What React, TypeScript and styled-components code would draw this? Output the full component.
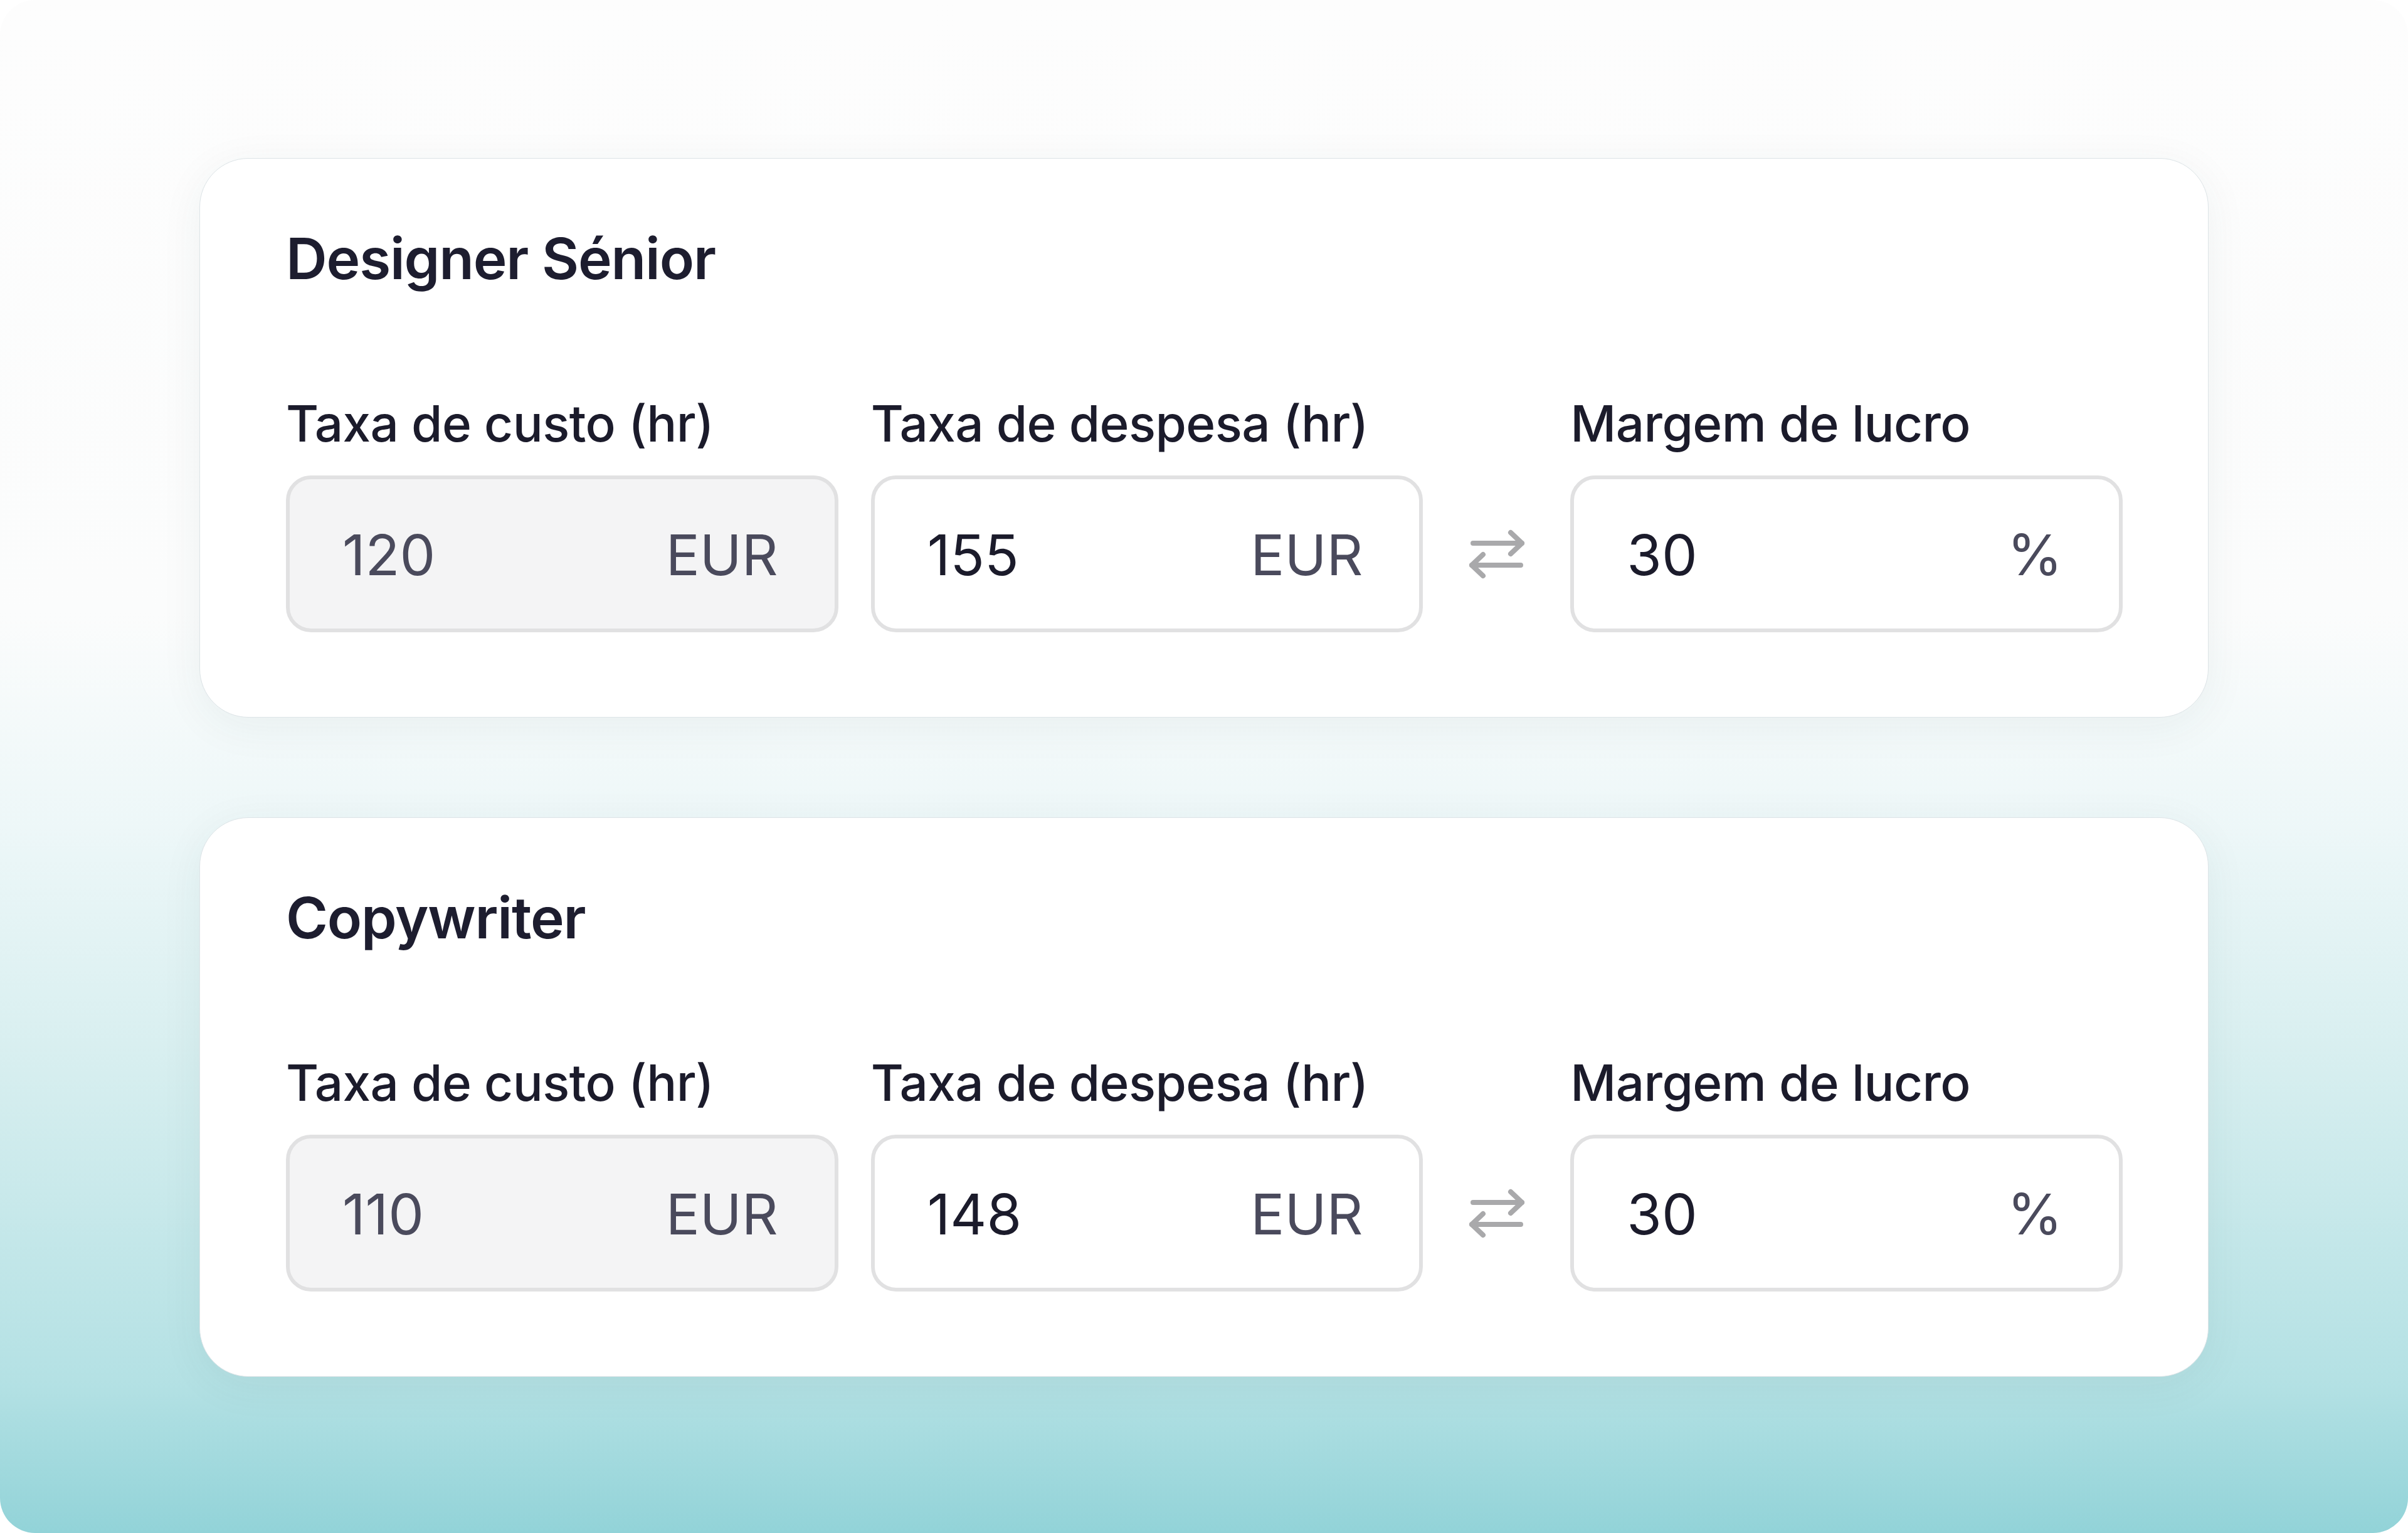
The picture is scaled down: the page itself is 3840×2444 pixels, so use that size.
import * as React from 'react';
import styled, { createGlobalStyle } from 'styled-components';

const GlobalStyle = createGlobalStyle`
    html, body {
        margin: 0;
        padding: 0;
        background: #ffffff;
    }
    body {
        font-family: Inter, "Noto Sans", "Liberation Sans", sans-serif;
        -webkit-font-smoothing: antialiased;
    }
`;

const Frame = styled.div`
    box-sizing: border-box;
    width: 3840px;
    height: 2444px;
    padding: 252px 318px 0;
    border-radius: 56px;
    overflow: hidden;
    display: flex;
    flex-direction: column;
    gap: 159px;
    background: linear-gradient(
        180deg,
        #fdfdfd 0%,
        #fbfcfc 40%,
        #edf7f8 54%,
        #d6eeef 70%,
        #b4e1e4 90%,
        #92d3d8 100%
    );
`;

const Card = styled.section`
    box-sizing: border-box;
    height: 892px;
    padding: 114px 136px 0 137px;
    background: #ffffff;
    border: 1px solid #dde4e7;
    border-radius: 78px;
    box-shadow: 0 14px 70px rgba(40, 60, 70, 0.06);
`;

const Title = styled.h2`
    margin: 0 0 177px;
    font-size: 91px;
    line-height: 1;
    font-weight: 600;
    color: #1d1d2f;
    letter-spacing: -1.2px;
`;

const Row = styled.div`
    display: grid;
    grid-template-columns: 1fr 1fr 131px 1fr;
    column-gap: 52px;
    align-items: end;
`;

const Field = styled.div`
    display: flex;
    flex-direction: column;
    gap: 43px;
`;

const Label = styled.span`
    font-size: 80px;
    line-height: 1;
    font-weight: 500;
    color: #1b1b2b;
    letter-spacing: -0.6px;
    white-space: nowrap;
`;

const Box = styled.div<{ $disabled?: boolean }>`
    box-sizing: border-box;
    height: 250px;
    display: flex;
    align-items: center;
    justify-content: space-between;
    padding: 4px 90px 0 84px;
    border: 6px solid #e1e1e2;
    border-radius: 40px;
    background: ${p => (p.$disabled ? '#f4f4f5' : '#ffffff')};
    font-size: 90px;
    line-height: 1;
    font-weight: 400;
`;

const Value = styled.span<{ $muted?: boolean }>`
    color: ${p => (p.$muted ? '#4a4a5c' : '#1b1b2b')};
`;

const Unit = styled.span`
    color: #4a4a5c;
`;

const SwapSlot = styled.div`
    height: 250px;
    display: flex;
    align-items: center;
    justify-content: center;
`;

const SwapIcon = () => (
    <svg width="90" height="83" viewBox="0 0 90 83" fill="none"
         stroke="#a9a9ab" strokeWidth="8" strokeLinecap="round" strokeLinejoin="round">
        <path d="M7 24H85"/>
        <path d="M67 7L85 24L67 41"/>
        <path d="M83 59H5"/>
        <path d="M23 42L5 59L23 76"/>
    </svg>
);

type RoleCardType = {
    name: string
    cost: number
    expense: number
    margin: number
}

const RoleCard: React.FC<RoleCardType> = ({ name, cost, expense, margin }) => (
    <Card>
        <Title>{name}</Title>
        <Row>
            <Field>
                <Label>Taxa de custo (hr)</Label>
                <Box $disabled>
                    <Value $muted>{cost}</Value>
                    <Unit>EUR</Unit>
                </Box>
            </Field>
            <Field>
                <Label>Taxa de despesa (hr)</Label>
                <Box>
                    <Value>{expense}</Value>
                    <Unit>EUR</Unit>
                </Box>
            </Field>
            <SwapSlot>
                <SwapIcon/>
            </SwapSlot>
            <Field>
                <Label>Margem de lucro</Label>
                <Box>
                    <Value>{margin}</Value>
                    <Unit>%</Unit>
                </Box>
            </Field>
        </Row>
    </Card>
);

const roles: RoleCardType[] = [
    { name: 'Designer Sénior', cost: 120, expense: 155, margin: 30 },
    { name: 'Copywriter', cost: 110, expense: 148, margin: 30 },
];

export default function App() {
    return (
        <>
            <GlobalStyle/>
            <Frame>
                {roles.map(r => <RoleCard key={r.name} {...r}/>)}
            </Frame>
        </>
    );
}
